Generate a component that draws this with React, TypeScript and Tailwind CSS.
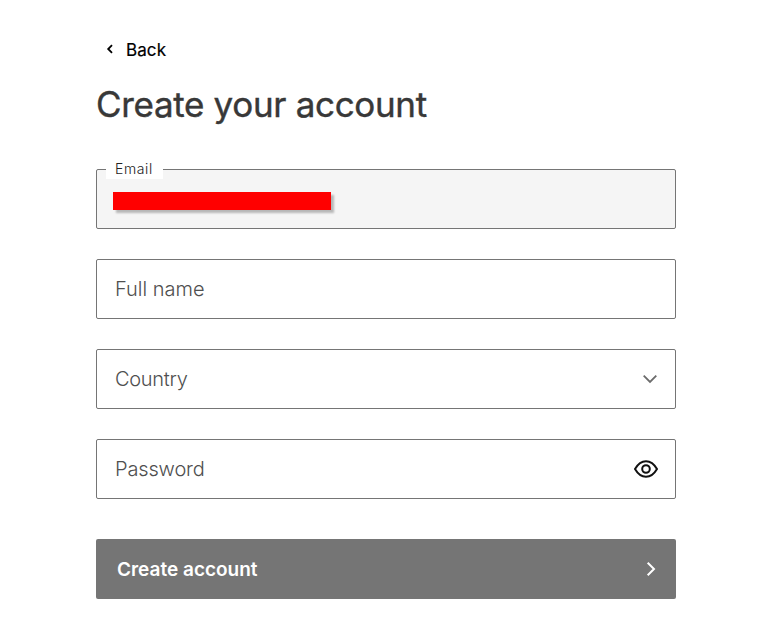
import type { ReactNode } from "react";

function Field({ label, children }: { label: ReactNode; children?: ReactNode }) {
  return (
    <div className="flex h-[60px] items-center justify-between rounded-[2px] border border-[#757575] bg-white pr-[17px] pl-[18px] text-[20px] leading-6 font-light text-[#4f4f4f]">
      {label}
      {children}
    </div>
  );
}

export default function App() {
  return (
    <main className="min-h-[639px] bg-white pt-[37px] pl-24 font-['Inter',sans-serif]">
      <div className="w-[580px]">
        <a className="flex h-6 w-fit items-center pl-[10px] text-black" href="#">
          <svg className="h-[10px] w-2" viewBox="0 0 8 10" fill="none" stroke="currentColor" strokeWidth="1.8">
            <path d="M6 1.2 2.2 5 6 8.8" />
          </svg>
          <span className="ml-3 pt-0.5 text-[17px] leading-6 tracking-[0.1px] [-webkit-text-stroke:0.2px_currentColor]">Back</span>
        </a>
        <h1 className="mt-[21px] h-11 text-[35px] leading-[44px] font-normal tracking-[-0.33px] whitespace-nowrap text-[#383838] [-webkit-text-stroke:0.4px_currentColor]">
          <span>Create your account</span>
        </h1>

        <form className="mt-[43px] flex flex-col">
          <div className="relative h-[60px] rounded-[2px] border border-[#757575] bg-[#f5f5f5] pt-[22px] pl-4">
            <span className="absolute -top-[11px] left-[9px] flex h-[20px] w-[57px] items-center bg-white pl-[9px] text-[14px] leading-5 font-light tracking-[0.6px] text-[#222]">
              <span>Email</span>
            </span>
            <div className="h-[18px] w-[218px] bg-[#ff0000] shadow-[3px_3px_2px_rgba(0,0,0,0.25)]" />
          </div>
          <div className="mt-[30px] flex flex-col gap-[30px]">
            <Field label={<span>Full name</span>} />
            <Field label={<span className="tracking-[-0.3px]">Country</span>}>
              <svg className="h-4 w-4" viewBox="0 0 16 16" fill="none" stroke="#6b6b6b" strokeWidth="1.8">
                <path d="m1.7 4.7 6.3 6.3 6.3-6.3" />
              </svg>
            </Field>
            <Field label={<span className="tracking-[-0.15px]">Password</span>}>
              <svg className="h-6 w-6" viewBox="0 0 24 24" fill="none" stroke="#111" strokeWidth="2" strokeLinejoin="round">
                <path d="M1 12C3.9 7 7.2 4.2 12 4.2S20.1 7 23 12C20.1 17 16.8 19.8 12 19.8S3.9 17 1 12Z" />
                <circle cx="12" cy="12" r="3.8" />
              </svg>
            </Field>
          </div>
          <button
            type="button"
            className="mt-10 flex h-[60px] items-center justify-between rounded-[2px] bg-[#757575] pr-[17px] pl-[21px] text-[19px] leading-6 font-semibold text-white"
          >
            <span className="pt-0.5">Create account</span>
            <svg className="h-4 w-4" viewBox="0 0 16 16" fill="none" stroke="currentColor" strokeWidth="2">
              <path d="m4.7 1.7 6.3 6.3-6.3 6.3" />
            </svg>
          </button>
        </form>
      </div>
    </main>
  );
}
